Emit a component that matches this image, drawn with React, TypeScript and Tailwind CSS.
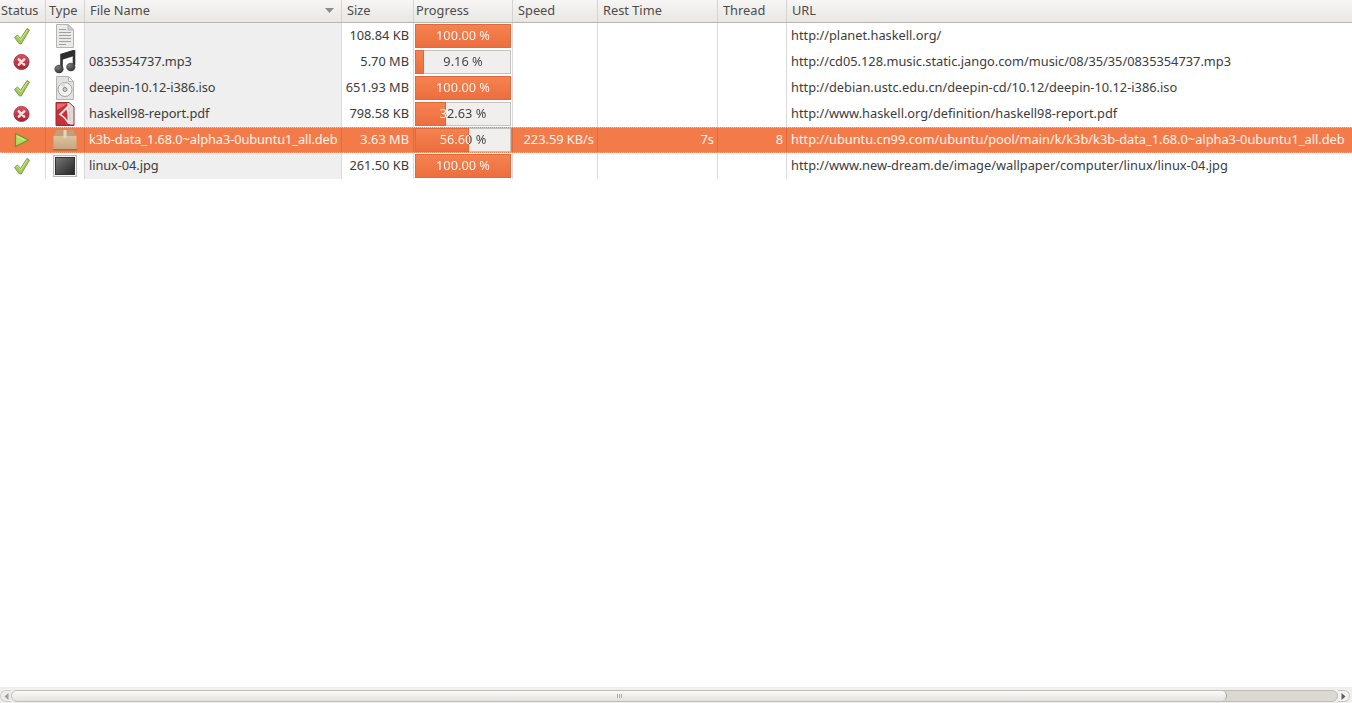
import React from "react";

const GRID = "grid grid-cols-[46px_39px_257px_72px_99px_85px_120px_69px_1fr]";

const Check = () => (
  <svg width="18" height="18" viewBox="0 0 18 18">
    <path d="M1.5 10.5 L4.5 8 L7.5 11.5 L14 1.5 L16.5 3 L8.2 17 L6.5 17 Z" fill="#a3c95c" stroke="#7ea03e" strokeWidth="1" strokeLinejoin="round" />
    <path d="M3.5 10.2 L4.6 9.4 L7.6 13 L14.3 3" fill="none" stroke="#cfe69b" strokeWidth="1" />
  </svg>
);

const Err = () => (
  <svg width="18" height="18" viewBox="0 0 18 18">
    <defs>
      <linearGradient id="er" x1="0" y1="0" x2="0" y2="1">
        <stop offset="0" stopColor="#e2505c" />
        <stop offset="1" stopColor="#a8242f" />
      </linearGradient>
    </defs>
    <circle cx="8.5" cy="9" r="7.6" fill="url(#er)" stroke="#8f3038" strokeWidth="0.8" />
    <path d="M5.8 6.3 L11.2 11.7 M11.2 6.3 L5.8 11.7" stroke="#f4e6e6" strokeWidth="2.5" strokeLinecap="round" />
  </svg>
);

const Play = () => (
  <svg width="16" height="16" viewBox="0 0 16 16">
    <path d="M1.5 1.5 L14.5 8 L1.5 14.5 Z" fill="#b6d95f" stroke="#6c9329" strokeWidth="1.2" strokeLinejoin="round" />
    <path d="M3 4 L10.5 8" stroke="#dcefa4" strokeWidth="1" fill="none" />
  </svg>
);

const DocIcon = () => (
  <svg width="20" height="24" viewBox="0 0 20 24">
    <path d="M1.5 0.5 H13 L18.5 6 V23.5 H1.5 Z" fill="#eaeae8" stroke="#b4b4b2" />
    <path d="M13 0.5 V6 H18.5 Z" fill="#d0d0ce" stroke="#b4b4b2" />
    <path d="M4 5.5 H11 M4 8.5 H16 M4 11.5 H16 M4 14.5 H16 M4 17.5 H16 M4 20.5 H11" stroke="#a0a09e" strokeWidth="1" />
  </svg>
);

const MusicIcon = () => (
  <svg width="22" height="24" viewBox="0 0 22 24">
    <defs>
      <radialGradient id="nt" cx="0.35" cy="0.3" r="0.8">
        <stop offset="0" stopColor="#7c7c7c" />
        <stop offset="1" stopColor="#2c2c2c" />
      </radialGradient>
    </defs>
    <path d="M7.5 18 V5 L20 1 V15" fill="none" stroke="#333333" strokeWidth="2.6" />
    <path d="M7.5 4 L20 0.5 V6 L7.5 10 Z" fill="#2e2e2e" />
    <ellipse cx="5" cy="19" rx="4.6" ry="4.2" fill="url(#nt)" />
    <ellipse cx="16.8" cy="17" rx="4.6" ry="4.2" fill="url(#nt)" />
  </svg>
);

const IsoIcon = () => (
  <svg width="20" height="24" viewBox="0 0 20 24">
    <path d="M1.5 0.5 H13.5 L18.5 5.5 V23.5 H1.5 Z" fill="#e2e2e0" stroke="#b4b4b2" />
    <path d="M13.5 0.5 V5.5 H18.5 Z" fill="#f1f1ef" stroke="#b4b4b2" />
    <circle cx="10" cy="13.5" r="7" fill="#f1f1ef" stroke="#a3a3a1" />
    <path d="M10 13.5 L5 8.5 A7 7 0 0 1 10 6.5 Z" fill="#dcdcda" />
    <circle cx="10" cy="13.5" r="2" fill="#cfcfcd" stroke="#858583" />
  </svg>
);

const PdfIcon = () => (
  <svg width="20" height="24" viewBox="0 0 20 24">
    <path d="M1 0.5 H14 L19 5 V23.5 H1 Z" fill="#c5303a" stroke="#a02a30" />
    <path d="M2 1.5 H12 L9 4 L2 8 Z" fill="#e46a6e" />
    <path d="M12 1 H14 L18.5 5 V22.5 H15 Q15.5 11 12 1 Z" fill="#dcdada" />
    <path d="M13 3 Q8 8.5 3.5 12.5 Q9 15 13 22 L15 22 Q15.5 12 13 3 Z" fill="#efe2e2" />
    <path d="M11.5 7.5 Q8.5 10.5 6.5 12.5 Q10 14.5 12.5 18.5 Q13 13 11.5 7.5 Z" fill="#c5303a" />
  </svg>
);

const DebIcon = () => (
  <svg width="26" height="22" viewBox="0 0 26 22">
    <defs>
      <linearGradient id="bx" x1="0" y1="0" x2="0" y2="1">
        <stop offset="0" stopColor="#dcc29c" />
        <stop offset="1" stopColor="#c5a680" />
      </linearGradient>
    </defs>
    <path d="M4.5 1 H21.5 L24.5 7 H1.5 Z" fill="#bfa07a" />
    <rect x="1.5" y="7" width="23" height="13" fill="url(#bx)" />
    <rect x="11.5" y="1" width="3" height="8" fill="#e7d5bb" />
    <rect x="1" y="20" width="24" height="1.5" fill="#b0643c" />
  </svg>
);

const JpgIcon = () => (
  <svg width="24" height="24" viewBox="0 0 24 24">
    <defs>
      <linearGradient id="im" x1="0" y1="0" x2="1" y2="1">
        <stop offset="0" stopColor="#767676" />
        <stop offset="1" stopColor="#242424" />
      </linearGradient>
    </defs>
    <rect x="0.5" y="1.5" width="23" height="21" fill="#f2f2f2" stroke="#b8b8b8" />
    <rect x="2.5" y="3.5" width="19" height="17" fill="url(#im)" stroke="#333" />
  </svg>
);

type Row = {
  status: "ok" | "err" | "run";
  type: React.ReactNode;
  name: string;
  size: string;
  pct: number;
  label: string;
  speed?: string;
  rest?: string;
  thread?: string;
  url: string;
};

const rows: Row[] = [
  { status: "ok", type: <DocIcon />, name: "", size: "108.84 KB", pct: 100, label: "100.00 %", url: "http://planet.haskell.org/" },
  { status: "err", type: <MusicIcon />, name: "0835354737.mp3", size: "5.70 MB", pct: 9.16, label: "9.16 %", url: "http://cd05.128.music.static.jango.com/music/08/35/35/0835354737.mp3" },
  { status: "ok", type: <IsoIcon />, name: "deepin-10.12-i386.iso", size: "651.93 MB", pct: 100, label: "100.00 %", url: "http://debian.ustc.edu.cn/deepin-cd/10.12/deepin-10.12-i386.iso" },
  { status: "err", type: <PdfIcon />, name: "haskell98-report.pdf", size: "798.58 KB", pct: 32.63, label: "32.63 %", url: "http://www.haskell.org/definition/haskell98-report.pdf" },
  { status: "run", type: <DebIcon />, name: "k3b-data_1.68.0~alpha3-0ubuntu1_all.deb", size: "3.63 MB", pct: 56.6, label: "56.60 %", speed: "223.59 KB/s", rest: "7s", thread: "8", url: "http://ubuntu.cn99.com/ubuntu/pool/main/k/k3b/k3b-data_1.68.0~alpha3-0ubuntu1_all.deb" },
  { status: "ok", type: <JpgIcon />, name: "linux-04.jpg", size: "261.50 KB", pct: 100, label: "100.00 %", url: "http://www.new-dream.de/image/wallpaper/computer/linux/linux-04.jpg" },
];

const headers = ["Status", "Type", "File Name", "Size", "Progress", "Speed", "Rest Time", "Thread", "URL"];

const headerPad = ["pl-px", "pl-[3px]", "pl-[5px]", "pl-[5px]", "pl-[2px]", "pl-[5px]", "pl-[5px]", "pl-[5px]", "pl-[5px]"];

const Progress = ({ pct, label }: { pct: number; label: string }) => {
  const w = (pct / 100) * 96;
  return (
    <div className="relative h-[24px] w-[96px] border border-[#c4c2be] bg-[#f1efed]">
      <div
        className="absolute -left-px -top-px h-[24px] border border-[#dd6a3c] bg-gradient-to-b from-[#f6824f] to-[#ec6e3e]"
        style={{ width: `${w}px` }}
      />
      <div
        className="relative bg-clip-text text-center leading-[20px] text-transparent"
        style={{ backgroundImage: `linear-gradient(to right, #ffffff ${w - 1}px, #404040 ${w - 1}px)` }}
      >
        {label}
      </div>
    </div>
  );
};

const Scrollbar = () => (
  <div className="flex h-[16px] items-start bg-[#f1efed] pt-[3px]">
    <div className="flex h-[12px] w-[11px] items-center justify-center rounded-l-full border border-r-0 border-[#d2cfca] bg-[#eeecea]">
      <svg width="5" height="7" viewBox="0 0 5 7">
        <path d="M4.5 0 V7 L0.5 3.5 Z" fill="#a09e9a" />
      </svg>
    </div>
    <div className="flex h-[12px] w-[1327px] rounded-full border border-[#c0bdb7] bg-[#dcd9d4]">
      <div className="flex h-[10px] w-[1215px] items-center justify-center rounded-full border-r border-[#a8a59f] bg-gradient-to-b from-[#fbfafa] to-[#e4e2df]">
        <div className="flex gap-px">
          <span className="h-[4px] w-px bg-[#b0ada8]" />
          <span className="h-[4px] w-px bg-[#b0ada8]" />
          <span className="h-[4px] w-px bg-[#b0ada8]" />
        </div>
      </div>
    </div>
    <div className="flex h-[12px] w-[12px] items-center justify-center rounded-r-full border border-l-0 border-[#c8c5c0] bg-[#f4f2f0]">
      <svg width="5" height="7" viewBox="0 0 5 7">
        <path d="M0.5 0 V7 L4.5 3.5 Z" fill="#5f5d59" />
      </svg>
    </div>
  </div>
);

export default function App() {
  return (
    <div className="flex h-[703px] w-[1352px] flex-col overflow-hidden bg-white font-['Noto_Sans',sans-serif] text-[12.8px] text-[#3c3c3c]">
      <div className="flex-1">
        <div className={`${GRID} h-[23px] border-b border-[#b9b6b1] bg-gradient-to-b from-[#f7f6f4] to-[#e9e7e4] text-[#4c4c4c]`}>
          {headers.map((h, i) => (
            <div
              key={h}
              className={`flex items-center pb-px ${headerPad[i]} ${i === 8 ? "" : "border-r border-[#d6d4d0]"} ${i === 2 ? "justify-between pr-[7px]" : ""}`}
            >
              <span>{h}</span>
              {i === 2 && (
                <svg width="9" height="5" viewBox="0 0 9 5">
                  <path d="M0 0 H9 L4.5 5 Z" fill="#8f8d89" />
                </svg>
              )}
            </div>
          ))}
        </div>
        {rows.map((r) => {
          const sel = r.status === "run";
          const line = sel ? "border-r border-[#dd6b3c]" : "border-r border-[#d9d9d9]";
          return (
            <div
              key={r.url}
              className={`${GRID} h-[26px] ${sel ? "border-y border-dotted border-[#f9c4ab] bg-[#f37b4a] text-[#fff4ee]" : ""}`}
            >
              <div className={`flex items-center justify-center pr-px ${line}`}>
                {r.status === "ok" ? <Check /> : r.status === "err" ? <Err /> : <Play />}
              </div>
              <div className={`flex items-center justify-center ${line}`}>{r.type}</div>
              <div className={`flex items-center whitespace-nowrap pb-px pl-[4px] tracking-[-0.08px] ${line} ${sel ? "" : "bg-[#efefef]"}`}>{r.name}</div>
              <div className={`flex items-center justify-end pb-px pr-[4px] ${line}`}>{r.size}</div>
              <div className={`flex items-center pl-px ${line}`}>
                <Progress pct={r.pct} label={r.label} />
              </div>
              <div className={`flex items-center justify-end pb-px pr-[3px] ${line}`}>{r.speed}</div>
              <div className={`flex items-center justify-end pb-px pr-[3px] ${line}`}>{r.rest}</div>
              <div className={`flex items-center justify-end pb-px pr-[3px] ${line}`}>{r.thread}</div>
              <div className="flex items-center whitespace-nowrap pb-px pl-[4px]">{r.url}</div>
            </div>
          );
        })}
      </div>
      <Scrollbar />
    </div>
  );
}
